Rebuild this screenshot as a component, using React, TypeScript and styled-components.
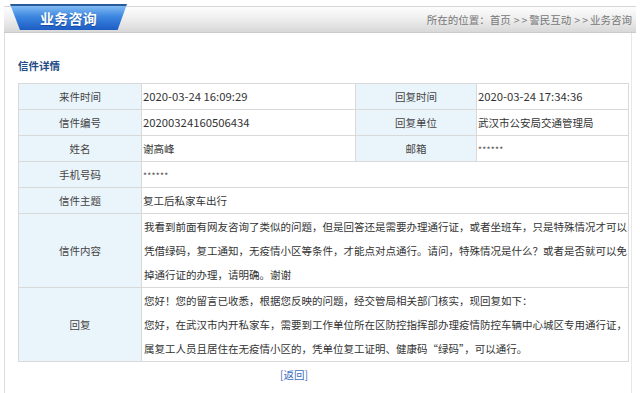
import React from 'react';
import styled, { createGlobalStyle } from 'styled-components';

const Global = createGlobalStyle`
  html, body { margin: 0; padding: 0; background: #fff; }
  body {
    font-family: "Noto Sans CJK SC", "Noto Sans", sans-serif;
    font-size: 10.5px;
    color: #333;
  }
`;

const Page = styled.div`
  width: 640px;
  height: 393px;
  overflow: hidden;
  padding: 0 4px;
  box-sizing: border-box;
`;

const HeaderBar = styled.div`
  margin-top: 6px;
  height: 27px;
  box-sizing: border-box;
  border-top: 1px solid #d6d6d6;
  border-bottom: 1px solid #cacaca;
  background: linear-gradient(#fdfdfd, #efefef 45%, #d8d8d8);
  display: flex;
  align-items: flex-start;
  justify-content: space-between;
  padding: 0 4px 0 6px;
`;

const Tab = styled.div`
  margin-top: -3px;
  width: 117px;
  height: 26px;
  clip-path: polygon(0 0, 100% 0, 92% 100%, 8.5% 100%);
  background: linear-gradient(#7fbaf2, #3c86e0 45%, #1d5cc4);
  border-top: 2px solid #2b5a9a;
  box-sizing: border-box;
  display: flex;
  align-items: center;
  justify-content: center;
  color: #fff;
  font-size: 14px;
  font-weight: bold;
  letter-spacing: 0.2px;
  text-shadow: 0 1px 1px rgba(0, 40, 110, 0.5);
`;

const Crumb = styled.div`
  align-self: center;
  color: #777;
  font-size: 10.5px;
  white-space: pre;
`;

const Arrows = styled.span`
  letter-spacing: 2px;
  margin-left: 3px;
`;

const Panel = styled.div`
  margin-right: 4px;
  height: 400px;
  border-left: 1px solid #dcdcdc;
  border-right: 1px solid #e8e8e8;
  padding: 26px 0 0 13px;
`;

const Title = styled.div`
  line-height: 14px;
  font-weight: bold;
  color: #1f4c86;
  margin-bottom: 10px;
`;

const Table = styled.table`
  border-collapse: collapse;
  width: 610px;
  table-layout: fixed;
`;

const Row = styled.tr<{ $tall?: boolean }>`
  height: ${(p) => (p.$tall ? 74 : 26)}px;
`;

const Label = styled.td`
  border: 1px solid #d9d9d9;
  background: #eaf4fb;
  text-align: center;
  vertical-align: middle;
  padding: 0;
  color: #444;
`;

const Value = styled.td<{ $multi?: boolean }>`
  border: 1px solid #d9d9d9;
  background: #fff;
  padding: ${(p) => (p.$multi ? '0 1px 0 2px' : '0 2px 0 1px')};
  line-height: ${(p) => (p.$multi ? '24px' : '14px')};
  vertical-align: middle;
  color: #333;
`;

const Num = styled.span`
  font-size: 11.3px;
  color: #333;
`;

const Stars = styled.span`
  font-size: 8.5px;
  color: #555;
  letter-spacing: 0.3px;
`;

const Back = styled.div`
  padding: 7px 0 0 262px;
  color: #3b6cc0;
  line-height: 12px;
`;

export default function App() {
  return (
    <>
      <Global />
      <Page>
        <HeaderBar>
          <Tab>业务咨询</Tab>
          <Crumb>
            所在的位置：首页<Arrows>&gt;&gt;</Arrows>警民互动<Arrows>&gt;&gt;</Arrows>业务咨询
          </Crumb>
        </HeaderBar>
        <Panel>
          <Title>信件详情</Title>
          <Table>
            <colgroup>
              <col style={{ width: 123 }} />
              <col style={{ width: 214 }} />
              <col style={{ width: 121 }} />
              <col style={{ width: 152 }} />
            </colgroup>
            <tbody>
              <Row>
                <Label>来件时间</Label>
                <Value><Num>2020-03-24 16:09:29</Num></Value>
                <Label>回复时间</Label>
                <Value><Num>2020-03-24 17:34:36</Num></Value>
              </Row>
              <Row>
                <Label>信件编号</Label>
                <Value><Num>20200324160506434</Num></Value>
                <Label>回复单位</Label>
                <Value>武汉市公安局交通管理局</Value>
              </Row>
              <Row>
                <Label>姓名</Label>
                <Value>谢高峰</Value>
                <Label>邮箱</Label>
                <Value><Stars>******</Stars></Value>
              </Row>
              <Row>
                <Label>手机号码</Label>
                <Value colSpan={3}><Stars>******</Stars></Value>
              </Row>
              <Row>
                <Label>信件主题</Label>
                <Value colSpan={3}>复工后私家车出行</Value>
              </Row>
              <Row $tall>
                <Label>信件内容</Label>
                <Value colSpan={3} $multi>
                  我看到前面有网友咨询了类似的问题，但是回答还是需要办理通行证，或者坐班车，只是特殊情况才可以凭借绿码，复工通知，无疫情小区等条件，才能点对点通行。请问，特殊情况是什么？或者是否就可以免掉通行证的办理，请明确。谢谢
                </Value>
              </Row>
              <Row $tall>
                <Label>回复</Label>
                <Value colSpan={3} $multi>
                  您好！您的留言已收悉，根据您反映的问题，经交管局相关部门核实，现回复如下：
                  <br />
                  您好，在武汉市内开私家车，需要到工作单位所在区防控指挥部办理疫情防控车辆中心城区专用通行证，属复工人员且居住在无疫情小区的，凭单位复工证明、健康码“绿码”，可以通行。
                </Value>
              </Row>
            </tbody>
          </Table>
          <Back>[返回]</Back>
        </Panel>
      </Page>
    </>
  );
}
